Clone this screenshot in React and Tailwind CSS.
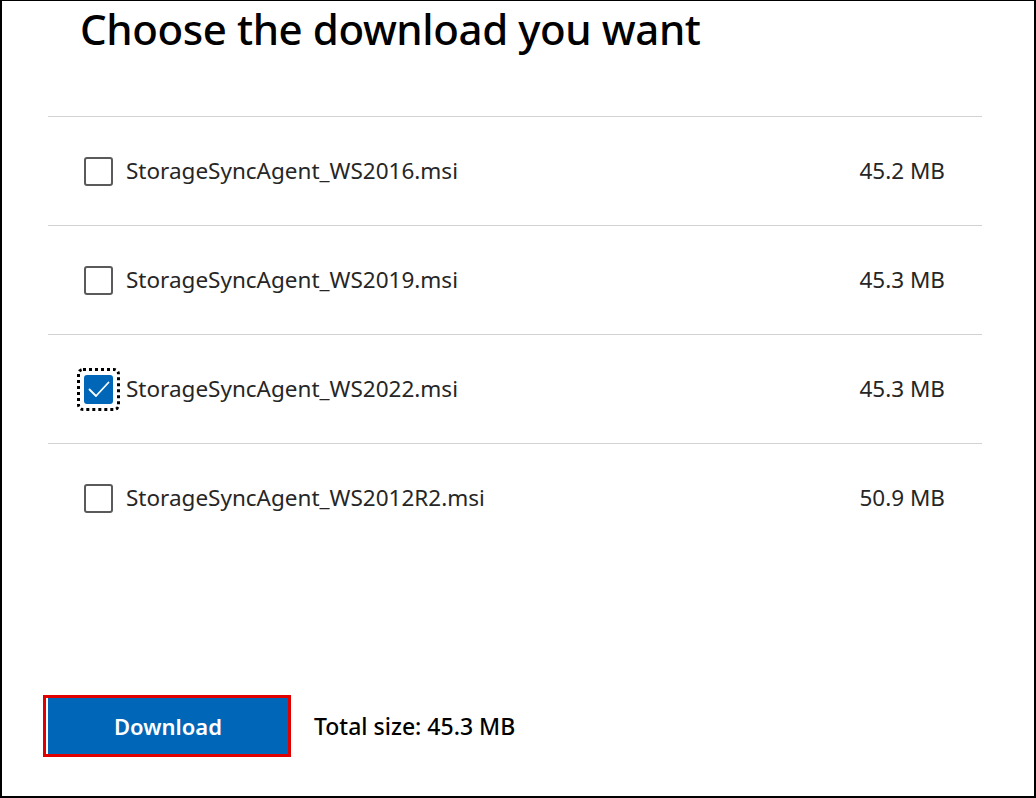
import React from 'react';

const files = [
  { name: 'StorageSyncAgent_WS2016.msi', size: '45.2 MB', checked: false },
  { name: 'StorageSyncAgent_WS2019.msi', size: '45.3 MB', checked: false },
  { name: 'StorageSyncAgent_WS2022.msi', size: '45.3 MB', checked: true },
  { name: 'StorageSyncAgent_WS2012R2.msi', size: '50.9 MB', checked: false },
];

const Checkbox = ({ checked }) => {
  if (!checked) {
    return <div className="w-[29px] h-[29px] border-2 border-[#5a5a5a] rounded-[3px] bg-white shrink-0" />;
  }
  return (
    <div className="relative w-[29px] h-[29px] shrink-0">
      {/* focus ring */}
      <div className="absolute -inset-[7px] border-[3px] border-dotted border-black rounded-[6px]" />
      <div className="w-[29px] h-[29px] rounded-[3px] bg-[#0067b8] flex items-center justify-center">
        <svg width="24" height="24" viewBox="0 0 24 24" fill="none">
          <path d="M2.5 12.5 L9 19 L21.5 5.5" stroke="white" strokeWidth="1.8" strokeLinecap="round" strokeLinejoin="round" />
        </svg>
      </div>
    </div>
  );
};

const App = () => {
  return (
    <div className="w-[1036px] h-[798px] bg-white border-t border-l-2 border-r-2 border-b-2 border-black font-['Noto_Sans',sans-serif] flex flex-col">
      <div className="h-[115px] pl-[78px]">
        <h1 className="text-[42px] leading-[56px] font-medium text-black tracking-[-0.4px]">Choose the download you want</h1>
      </div>

      <div className="ml-[46px] w-[934px] flex flex-col">
        {files.map(file => (
          <div key={file.name} className="h-[109px] border-t border-[#d2d2d2] flex items-center pl-[36px] pr-[37px]">
            <Checkbox checked={file.checked} />
            <div className="ml-[13px] text-[22.5px] text-[#262626]">{file.name}</div>
            <div className="ml-auto text-[22.5px] text-[#262626]">{file.size}</div>
          </div>
        ))}
      </div>

      <div className="mt-[143px] ml-[41px] flex items-center">
        <div className="w-[248px] h-[62px] border-[3px] border-[#e00000] flex">
          <div className="ml-[2px] flex-1 bg-[#0067b8] flex items-center justify-center">
            <span className="text-white text-[22px] font-semibold">Download</span>
          </div>
        </div>
        <div className="ml-[23px] text-[23px] font-medium text-black">Total size: 45.3 MB</div>
      </div>
    </div>
  );
};

export default App;
